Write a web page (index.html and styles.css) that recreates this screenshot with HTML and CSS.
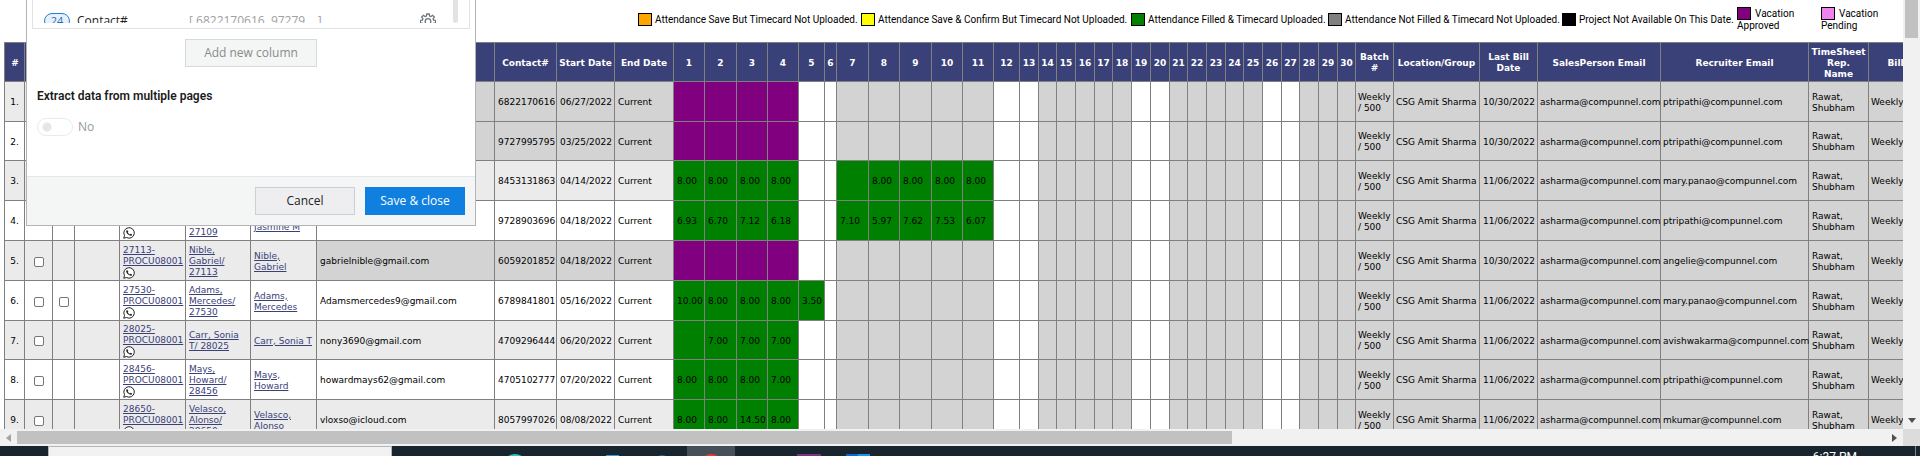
FILE: index.html
```
<!DOCTYPE html>
<html lang="en">
<head>
<meta charset="utf-8">
<title>Timesheet attendance</title>
<link rel="stylesheet" href="styles.css">
</head>
<body>
<svg class="sprite" aria-hidden="true">
  <symbol id="whatsapp" viewBox="0 0 24 24">
    <path d="M1.500 22.500 3 17A10.500 10.500 0 1 1 7 21z" fill="#fff" stroke="#222" stroke-width="2"/>
    <path d="M8.300 6.200c-1.300.2-2 1.500-1.900 2.800.2 2 1.500 4 3.300 5.700 2 1.800 4.300 3 6 2.900 1.500-.1 2.500-1.200 2.500-2.600l-3-1.700-1.700 1.500c-1.700-.8-3.200-2.200-3.900-3.800l1.200-1.500z" fill="#222"/>
  </symbol>
</svg>
<div class="workspace">
  <main class="page">
    <ul class="legend">
      <li><span class="swatch orange"></span>Attendance Save But Timecard Not Uploaded.</li>
      <li><span class="swatch yellow"></span>Attendance Save &amp; Confirm But Timecard Not Uploaded.</li>
      <li><span class="swatch green"></span>Attendance Filled &amp; Timecard Uploaded.</li>
      <li><span class="swatch gray"></span>Attendance Not Filled &amp; Timecard Not Uploaded.</li>
      <li><span class="swatch black"></span>Project Not Available On This Date.</li>
      <li class="wrap"><span class="swatch purple"></span>Vacation<br>Approved</li>
      <li class="wrap"><span class="swatch violet"></span>Vacation<br>Pending</li>
    </ul>
    <table class="sheet">
      <colgroup id="cols"></colgroup>
      <thead><tr id="head"></tr></thead>
      <tbody id="rows"></tbody>
    </table>
  </main>
  <div class="vbar"><span class="vthumb"></span><svg class="arrow" viewBox="0 0 8 5"><path d="M0 0h8L4 5z" fill="#505050"/></svg></div>
</div>
<div class="hbar">
  <svg class="arrow-side" viewBox="0 0 5 8"><path d="M5 0v8L0 4z" fill="#a3a3a3"/></svg>
  <div class="htrack"><span class="hthumb"></span></div>
  <svg class="arrow-side" viewBox="0 0 5 8"><path d="M0 0v8l5-4z" fill="#505050"/></svg>
  <span class="corner"></span>
</div>
<footer class="taskbar">
  <div class="search"></div>
  <div class="apps">
    <span class="app"><svg viewBox="0 0 24 24"><circle cx="12" cy="12" r="12" fill="#2fc3c9"/></svg></span>
    <span class="app"></span>
    <span class="app"><svg viewBox="0 0 24 24"><path d="M5 1h13v20H5z" fill="#2ea0e0"/></svg></span>
    <span class="app"><svg viewBox="0 0 24 24"><circle cx="12" cy="9" r="8" fill="#1b5fa8"/></svg></span>
    <span class="app active"><svg viewBox="0 0 24 24"><circle cx="12" cy="12" r="12" fill="#e33b2e"/></svg></span>
    <span class="app"></span>
    <span class="app"><svg viewBox="0 0 24 24"><path d="M0 0h24v24H0z" fill="#7c3080"/></svg></span>
    <span class="app"><svg viewBox="0 0 24 24"><path d="M0 0h24v24H0z" fill="#0c67dd"/><path d="M12 0h12v24H12z" fill="#1c94e8"/></svg></span>
  </div>
  <time class="clock">6:37 PM</time>
  <span class="desktop-edge"></span>
</footer>
<section class="dialog" role="dialog" aria-label="Extract data">
  <div class="list">
    <div class="list-view">
      <div class="item">
        <span class="pill">24</span>
        <span class="item-name">Contact#</span>
        <span class="item-sample">[ 6822170616, 97279... ]</span>
        <svg class="gear" viewBox="0 0 16 16" fill="none" stroke="#6b7780" stroke-width="1.300"><path d="M6.800 1h2.400l.4 2 1.300.5L12.600 2.400l1.700 1.700-1.200 1.700.5 1.300 2 .3v2.400l-2 .4-.5 1.300 1.200 1.700-1.700 1.700-1.700-1.200-1.300.5-.4 1.800H6.800l-.4-1.800-1.300-.5-1.700 1.200-1.700-1.700 1.200-1.700-.5-1.300-2-.4V7.400l2-.3.5-1.300-1.200-1.700 1.700-1.700 1.700 1.100L6.400 3z"/><circle cx="8" cy="8.500" r="2.800"/></svg>
      </div>
      <span class="list-thumb"></span>
    </div>
  </div>
  <button class="btn add" type="button">Add new column</button>
  <h2>Extract data from multiple pages</h2>
  <label class="switch"><input type="checkbox" role="switch">No</label>
  <div class="actions">
    <button class="btn" type="button">Cancel</button>
    <button class="btn primary" type="button">Save &amp; close</button>
  </div>
</section>
<script src="sheet.js"></script>
</body>
</html>
```
FILE: styles.css
```
* { box-sizing: border-box; }
body {
  margin: 0;
  height: 100vh;
  display: flex;
  flex-direction: column;
  overflow: hidden;
  position: relative;
  background: #fff;
  color: #000;
  font: 9px/11px "DejaVu Sans", Verdana, sans-serif;
}
.sprite { display: none; }
.workspace { flex: 1; min-height: 0; display: flex; }
.page { flex: 1; min-width: 0; overflow: hidden; padding-left: 4px; }

.legend {
  list-style: none;
  margin: 0;
  padding: 7px 0 0;
  height: 42px;
  display: grid;
  grid-template-columns: 223px 270px 197px 234px 175px 84px 82px;
  justify-content: end;
  font: 10px/12px Roboto, sans-serif;
  white-space: nowrap;
}
.legend li { display: flex; gap: 3px; align-items: center; height: 25px; }
.legend .wrap { display: block; }
.swatch { width: 14px; height: 13px; border: 1px solid #000; flex: none; }
.wrap .swatch { display: inline-block; margin-right: 4px; vertical-align: bottom; }
.orange { background: orange; }
.yellow { background: yellow; }
.green { background: green; }
.gray { background: gray; }
.black { background: #000; }
.purple { background: purple; }
.violet { background: violet; }

.sheet { width: 1918px; table-layout: fixed; border-collapse: collapse; }
.sheet th, .sheet td { border: 1px solid gray; padding: 2px 0 0 3px; }
.sheet th { height: 39px; padding-left: 0; background: #3a4078; color: #fff; font-weight: bold; text-align: center; }
.sheet td { height: 40px; text-align: left; vertical-align: middle; background: #fff; white-space: nowrap; }
.sheet tr:nth-child(5n+2) td { height: 39px; }
.sheet tr:nth-child(odd) td { background: #ebebeb; }
.sheet .num, .sheet .pick { text-align: center; padding-left: 0; }
.sheet .tight { padding-left: 2px; }
.sheet .hash { font-style: italic; }
.sheet tr td.dim { background: #d3d3d3; }
.sheet tr td.off { background: #fff; }
.sheet tr td.filled { background: green; }
.sheet tr td.vacation { background: purple; }
.sheet a { color: #3a4078; text-decoration: underline; display: block; }
.sheet input { width: 10px; height: 10px; margin: 0; display: inline-block; vertical-align: middle; appearance: none; border: 1px solid #767676; border-radius: 2px; background: #fff; }
.wa { display: block; width: 12px; height: 12px; }

.vbar { width: 17px; background: #f1f1f1; display: flex; flex-direction: column; justify-content: space-between; align-items: center; padding-bottom: 6px; }
.vthumb { width: 13px; height: 38px; background: #c1c1c1; }
.arrow { width: 8px; height: 5px; }
.hbar { height: 17px; background: #f1f1f1; display: flex; align-items: center; padding-left: 6px; flex: none; }
.arrow-side { width: 5px; height: 8px; }
.htrack { flex: 1; height: 13px; padding: 0 6px; }
.hthumb { display: block; height: 100%; width: 65%; background: #c1c1c1; }
.corner { width: 17px; height: 17px; margin-left: 6px; background: #dcdcdc; }

.taskbar { height: 10px; flex: none; overflow: hidden; display: flex; align-items: flex-start; background: #18242e; padding-left: 48px; }
.search { width: 344px; height: 40px; background: #f2f2f2; border: 1px solid #b4b4b4; }
.apps { display: flex; gap: 1px; margin-left: 99px; flex: 1; }
.app { width: 48px; height: 40px; padding: 8px 12px; }
.app svg { display: block; width: 24px; height: 24px; }
.active { background: #465059; }
.clock { color: #fff; font: 12px/16px Roboto, sans-serif; padding-top: 3px; }
.desktop-edge { width: 1px; height: 40px; margin: 0 4px 0 58px; background: #7c858c; }

.dialog {
  position: absolute;
  left: 26px;
  top: 0;
  width: 450px;
  background: #fff;
  border: 1px solid #b4b4b4;
  border-top: 0;
  font: 12px/16px "Open Sans", "Segoe UI", sans-serif;
  color: #222;
  display: flex;
  flex-direction: column;
}
.list { margin: 0 5px; padding-bottom: 5px; border: 1px solid #e1e3e5; border-top: 0; }
.list-view { height: 23px; overflow: hidden; display: flex; justify-content: space-between; padding-right: 11px; }
.item { flex: 1; display: flex; align-items: center; padding: 13px 17px 0 11px; height: 29px; }
.pill { width: 26px; height: 16px; flex: none; border: 1px solid #2a7fcf; border-radius: 8px; background: #e6f0fa; color: #2a6db5; font-size: 11px; line-height: 14px; text-align: center; }
.item-name { width: 113px; padding-left: 7px; }
.item-sample { flex: 1; padding-left: 6px; color: #a0a0a0; }
.gear { width: 16px; height: 16px; }
.list-thumb { width: 5px; background: #e1e3e5; border-radius: 0 0 3px 3px; }
.btn { width: 100px; height: 28px; padding: 0; border: 1px solid #cdcfd3; background: #eeeef1; color: #222; font: inherit; }
.add { width: 132px; align-self: center; margin-top: 10px; background: #f4f6f6; border-color: #d7d9da; color: #8a8a8a; }
.dialog h2 { margin: 21px 0 0 10px; font: 600 12px/16px Roboto, sans-serif; color: #1b1b1b; }
.switch { display: flex; align-items: center; gap: 5px; margin: 14px 0 40px 10px; height: 18px; color: #999; }
.switch input { appearance: none; margin: 0; width: 36px; height: 18px; border: 1px solid #ebebeb; border-radius: 9px; background: radial-gradient(circle at 9px 8px, #e6e6e6 4px, #fff 5px); }
.actions { display: flex; justify-content: flex-end; gap: 10px; padding: 10px; background: #f4f6f6; border-top: 1px solid #e4e6e7; }
.primary { background: #0f7fe0; border-color: #0f7fe0; color: #fff; }
```
FILE: sheet.js
```
const widths = [20, 28, 22, 45, 66, 65, 66, 178, 62, 58, 59, 31, 32, 31, 31, 26, 12, 32, 31, 32, 31, 31, 26,
  19, 18, 19, 19, 18, 19, 19, 19, 18, 19, 19, 18, 19, 19, 18, 19, 19, 18, 38, 86, 58, 123, 148, 60, 54];
document.getElementById("cols").innerHTML = widths.map(w => `<col style="width:${w}px">`).join("");

const days = Array.from({ length: 30 }, (_, i) => i + 1);
const heads = ["#", "", "", "", "", "", "", "", "Contact#", "Start Date", "End Date", ...days,
  "Batch<br>#", "Location/Group", "Last Bill<br>Date", "SalesPerson Email", "Recruiter Email", "TimeSheet<br>Rep.<br>Name", "Bill"];
document.getElementById("head").innerHTML = heads.map((h, i) => `<th${i ? "" : ' class="hash"'}>${h}</th>`).join("");

const weekend = [5, 6, 12, 13, 19, 20, 26, 27];
const rows = [
  { phone: "6822170616", start: "06/27/2022", bill: "10/30/2022", rec: "ptripathi", vacation: true },
  { phone: "9727995795", start: "03/25/2022", bill: "10/30/2022", rec: "ptripathi", vacation: true },
  { phone: "8453131863", start: "04/14/2022", bill: "11/06/2022", rec: "mary.panao",
    hours: { 1: "8.00", 2: "8.00", 3: "8.00", 4: "8.00", 7: "", 8: "8.00", 9: "8.00", 10: "8.00", 11: "8.00" } },
  { phone: "9728903696", start: "04/18/2022", bill: "11/06/2022", rec: "ptripathi", id: "&nbsp;<br>&nbsp;", project: "&nbsp;<br>&nbsp;<br>27109", name: "&nbsp;<br>Jasmine M",
    hours: { 1: "6.93", 2: "6.70", 3: "7.12", 4: "6.18", 7: "7.10", 8: "5.97", 9: "7.62", 10: "7.53", 11: "6.07" } },
  { phone: "6059201852", start: "04/18/2022", bill: "10/30/2022", rec: "angelie", vacation: true, pick: 1,
    id: "27113-<br>PROCU08001", project: "Nible,<br>Gabriel/<br>27113", name: "Nible,<br>Gabriel", mail: "gabrielnible@gmail.com" },
  { phone: "6789841801", start: "05/16/2022", bill: "11/06/2022", rec: "mary.panao", pick: 2,
    id: "27530-<br>PROCU08001", project: "Adams,<br>Mercedes/<br>27530", name: "Adams,<br>Mercedes", mail: "Adamsmercedes9@gmail.com",
    hours: { 1: "10.00", 2: "8.00", 3: "8.00", 4: "8.00", 5: "3.50" } },
  { phone: "4709296444", start: "06/20/2022", bill: "11/06/2022", rec: "avishwakarma", pick: 1,
    id: "28025-<br>PROCU08001", project: "Carr, Sonia<br>T/ 28025", name: "Carr, Sonia T", mail: "nony3690@gmail.com",
    hours: { 1: "", 2: "7.00", 3: "7.00", 4: "7.00" } },
  { phone: "4705102777", start: "07/20/2022", bill: "11/06/2022", rec: "ptripathi", pick: 1,
    id: "28456-<br>PROCU08001", project: "Mays,<br>Howard/<br>28456", name: "Mays,<br>Howard", mail: "howardmays62@gmail.com",
    hours: { 1: "8.00", 2: "8.00", 3: "8.00", 4: "7.00" } },
  { phone: "8057997026", start: "08/08/2022", bill: "11/06/2022", rec: "mkumar", pick: 1,
    id: "28650-<br>PROCU08001", project: "Velasco,<br>Alonso/<br>28650", name: "Velasco,<br>Alonso", mail: "vloxso@icloud.com",
    hours: { 1: "8.00", 2: "8.00", 3: "14.50", 4: "8.00" } }
];

const cell = (text, cls = "") => `<td class="${cls}">${text}</td>`;
const link = text => text ? `<a href="#">${text}</a>` : "";
const box = (on, label) => on ? `<input type="checkbox" aria-label="${label}">` : "";

function dayCell(row, d) {
  if (row.vacation && d <= 4) return cell("", "vacation");
  if (row.hours && d in row.hours) return cell(row.hours[d], "filled");
  return cell("", weekend.includes(d) ? "off" : "dim");
}

document.getElementById("rows").innerHTML = rows.map((r, i) => {
  const tone = r.vacation ? "dim" : "";
  return "<tr>" + [
    cell(`${i + 1}.`, "num"),
    cell(box(r.pick, `Select row ${i + 1}`), "pick"),
    cell(box(r.pick === 2, `Confirm row ${i + 1}`), "pick"),
    cell(""),
    cell(link(r.id) + (r.id ? '<svg class="wa"><use href="#whatsapp"/></svg>' : "")),
    cell(link(r.project)),
    cell(link(r.name)),
    cell(r.mail || "", tone),
    cell(r.phone, tone),
    cell(r.start, tone),
    cell("Current", tone),
    ...days.map(d => dayCell(r, d)),
    cell("Weekly<br>/ 500", "dim tight"),
    cell("CSG Amit Sharma", "dim tight"),
    cell(r.bill, "dim"),
    cell("asharma@compunnel.com", "dim tight"),
    cell(r.rec + "@compunnel.com", "dim tight"),
    cell("Rawat,<br>Shubham", "dim"),
    cell("Weekly", "dim tight")
  ].join("") + "</tr>";
}).join("");
```
